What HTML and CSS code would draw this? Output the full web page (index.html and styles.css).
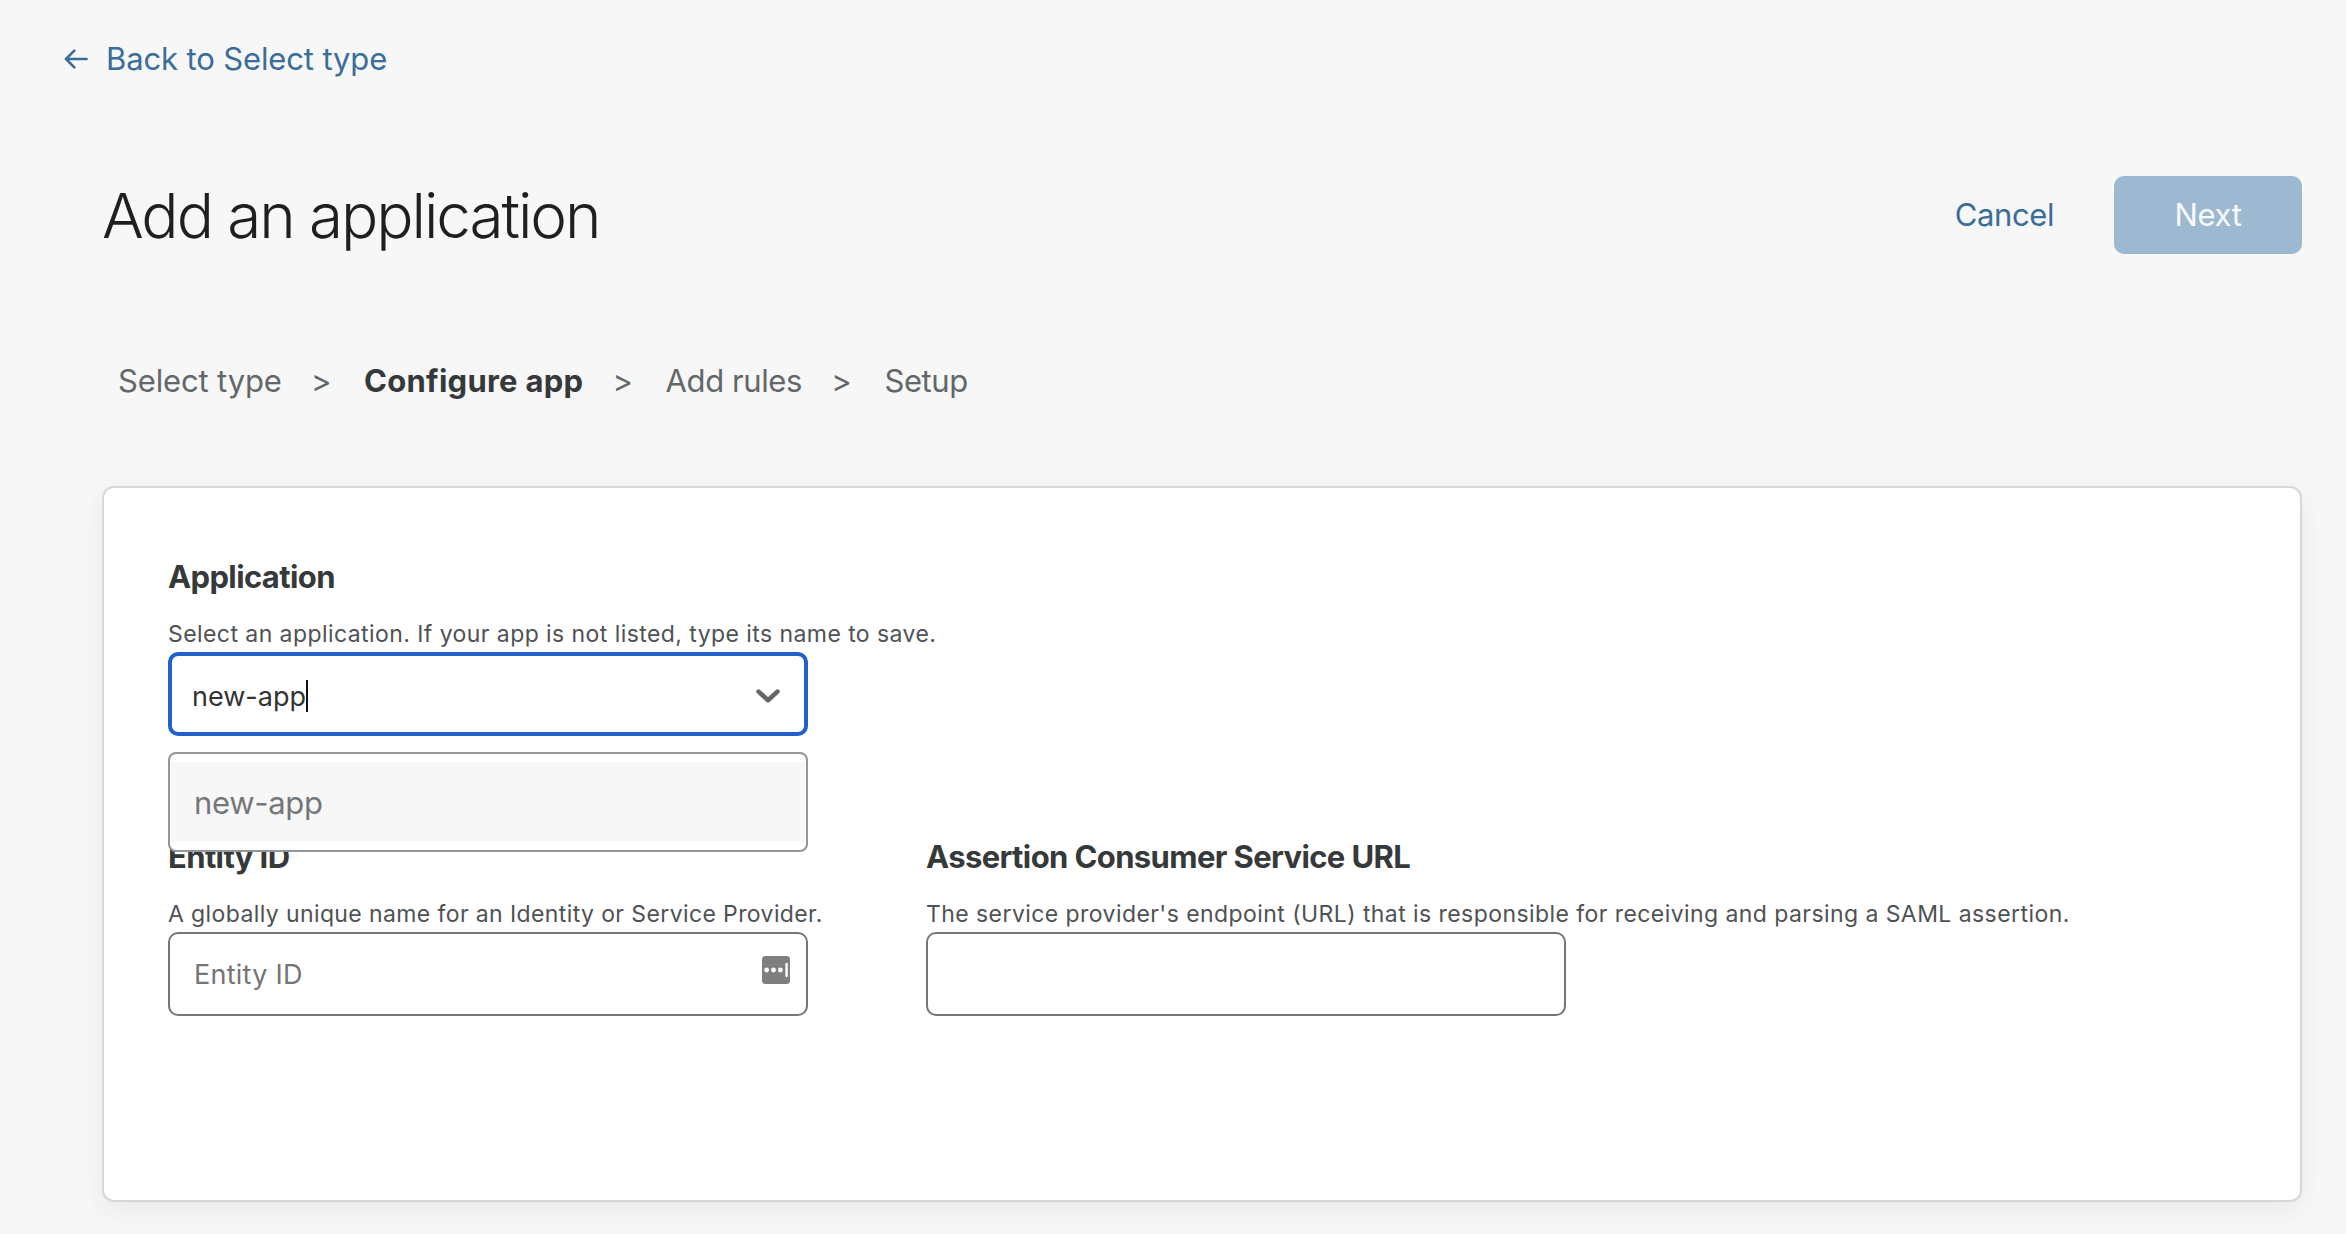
FILE: index.html
```html
<!DOCTYPE html>
<html lang="en">
<head>
<meta charset="utf-8">
<title>Add an application</title>
<link rel="stylesheet" href="styles.css">
</head>
<body>
<a class="back" href="#">
  <svg class="back-icon" width="24" height="20" viewBox="0 0 24 20" fill="none" stroke="currentColor" stroke-width="2.6" stroke-linecap="round" stroke-linejoin="round"><path d="M10.300 1.700 2 10l8.300 8.300M2 10h20.600"/></svg>
  <span class="back-label">Back to Select type</span>
</a>
<main class="page">
  <header class="header">
    <h1 class="title">Add an application</h1>
    <div class="actions">
      <a class="cancel" href="#">Cancel</a>
      <button class="next" type="button" disabled>Next</button>
    </div>
  </header>
  <nav class="steps">
    <span class="step">Select type</span><span class="sep">&gt;</span>
    <b class="step-current">Configure app</b><span class="sep">&gt;</span>
    <span class="step-later">Add rules</span><span class="sep">&gt;</span>
    <span class="step-later">Setup</span>
  </nav>
  <section class="card">
    <div class="field">
      <h2 class="label">Application</h2>
      <p class="help">Select an application. If your app is not listed, type its name to save.</p>
      <div class="combo">
        <div class="input focused">
          <span class="value">new-app</span><i class="caret"></i>
          <svg class="chevron" width="24" height="14" viewBox="0 0 24 14" fill="none" stroke="#666" stroke-width="4.6" stroke-linecap="round" stroke-linejoin="round"><path d="M2.600 2.600 12 11.200l9.400-8.600"/></svg>
        </div>
        <div class="menu"><div class="option"><span class="option-text">new-app</span></div></div>
      </div>
    </div>
    <div class="row">
      <div class="field">
        <h2 class="label">Entity ID</h2>
        <p class="help short">A globally unique name for an Identity or Service Provider.</p>
        <div class="input plain">
          <span class="placeholder">Entity ID</span>
          <svg class="fill-icon" width="28" height="28" viewBox="0 0 28 28"><rect width="28" height="28" rx="3.500" fill="#7f7f7f"/><circle cx="4.600" cy="14" r="2.400" fill="#fff"/><circle cx="11.500" cy="14" r="2.400" fill="#fff"/><circle cx="18.400" cy="14" r="2.400" fill="#fff"/><path d="M24.600 8v12" stroke="#fff" stroke-width="2.400" stroke-linecap="round"/></svg>
        </div>
      </div>
      <div class="field">
        <h2 class="label">Assertion Consumer Service URL</h2>
        <p class="help">The service provider's endpoint (URL) that is responsible for receiving and parsing a SAML assertion.</p>
        <div class="input plain"></div>
      </div>
    </div>
  </section>
</main>
</body>
</html>
```
FILE: styles.css
```css
* { box-sizing: border-box; }
body {
  margin: 0;
  width: 2346px;
  height: 1234px;
  overflow: hidden;
  background: #f7f7f7;
  color: #36393a;
  font: 400 31px/40px Inter, "Liberation Sans", sans-serif;
}
h1, h2, p { margin: 0; }
a { color: #3a6d99; text-decoration: none; }
.back { display: flex; align-items: center; gap: 18px; height: 118px; padding-left: 64px; width: 500px; letter-spacing: -.13px; white-space: nowrap; }
.page { padding: 0 44px 0 102px; }
.header { display: flex; align-items: center; justify-content: space-between; height: 194px; }
.title { padding-top: 2px; color: #1d1f20; font-size: 62px; font-weight: 300; line-height: 80px; letter-spacing: -2.07px; white-space: nowrap; }
.actions { display: flex; align-items: center; gap: 60px; letter-spacing: -.4px; }
.next { width: 188px; height: 78px; padding: 0; border: 0; border-radius: 10px; background: #9db9d1; color: #f9fafb; font: inherit; letter-spacing: -.3px; }
.steps { display: flex; align-items: center; gap: 29.2px; height: 138px; padding-left: 16px; color: #62676a; white-space: nowrap; }
.step { letter-spacing: -.15px; }
.step-current { color: #36393a; font-weight: 700; letter-spacing: .25px; }
.step-later { letter-spacing: -.4px; }
.sep { width: 24px; }
.card {
  display: flex; flex-direction: column; gap: 100px;
  height: 716px; margin-top: 36px; padding: 68px 64px 0;
  border: 2px solid #d5d7d8; border-radius: 12px; background: #fff;
  box-shadow: 0 8px 24px rgba(40, 50, 60, .07);
}
.row { display: flex; gap: 118px; }
.field { width: 640px; white-space: nowrap; }
.label { height: 42px; font-size: 31px; font-weight: 700; line-height: 42px; letter-spacing: -.62px; }
.help { height: 54px; padding-top: 19px; color: #4e5255; font-size: 23px; line-height: 34px; letter-spacing: .43px; }
.short { letter-spacing: .39px; }
.input { display: flex; align-items: center; height: 84px; border-radius: 10px; background: #fff; font-size: 27px; }
.focused { border: 4px solid #2161c9; padding: 3px 24px 0 20px; color: #333; }
.plain { border: 2px solid #72777b; padding: 0 16px 0 24px; }
.value { padding-top: 2px; }
.caret { width: 2px; height: 32px; background: #111; }
.chevron, .fill-icon { margin-left: auto; }
.fill-icon { margin-bottom: 8px; }
.placeholder { padding-top: 2px; color: #757575; letter-spacing: .25px; }
.combo { position: relative; }
.menu { position: absolute; left: 0; top: 100px; width: 640px; height: 100px; padding: 8px 0; border: 2px solid #92979b; border-radius: 8px; background: #fff; }
.option { display: flex; align-items: center; height: 80px; padding: 2px 0 0 24px; background: #f7f7f7; color: #72777b; letter-spacing: -.3px; }
```
